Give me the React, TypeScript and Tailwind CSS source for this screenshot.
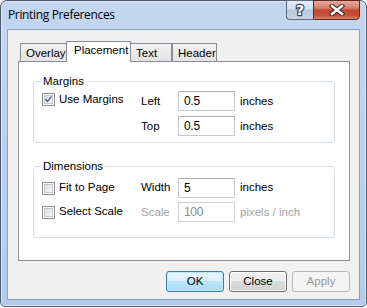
import React from "react";

const ui = "font-['Liberation_Sans',Arial,sans-serif] text-[11px] leading-none";

function Checkbox({ checked }: { checked?: boolean }) {
  return (
    <div className="w-[13px] h-[13px] border border-[#8e8f8f] bg-white p-[1px] shrink-0">
      <div className="w-full h-full border border-[#c4c8cc] bg-gradient-to-br from-[#d9dbdd] to-[#f6f6f6] flex items-center justify-center">
        {checked && (
          <svg width="9" height="9" viewBox="0 0 9 9">
            <path d="M1.2 4.6 L3.4 7 L7.8 1.2" fill="none" stroke="#4a5f97" strokeWidth="1.8" strokeLinecap="round" strokeLinejoin="round" />
          </svg>
        )}
      </div>
    </div>
  );
}

function Input({ value, disabled }: { value: string; disabled?: boolean }) {
  return (
    <div
      className={
        "w-[57px] h-[20px] border bg-white flex items-center pl-[5px] " +
        (disabled
          ? "border-[#cdd2d8] text-[#8a8a8a]"
          : "border-[#c5cbd3] border-t-[#abadb3] text-black")
      }
    >
      <span className="text-[12px] tracking-[-0.3px]">{value}</span>
    </div>
  );
}

function Button({ label, variant }: { label: string; variant?: "default" | "disabled" }) {
  const base = "w-[58px] h-[21px] rounded-[3px] border flex items-center justify-center text-[11.5px] ";
  if (variant === "disabled")
    return <div className={base + "border-[#b5b8bb] bg-[#f4f4f4] text-[#9a9a9a]"}>{label}</div>;
  if (variant === "default")
    return (
      <div className={base + "border-[#3c7fb1] bg-[linear-gradient(#eaf6fd_0%,#d9f0fc_50%,#bee6fd_50%,#a7d9f5_100%)] shadow-[inset_0_0_0_1px_#bfe6fa] text-black"}>
        {label}
      </div>
    );
  return (
    <div className={base + "border-[#707070] bg-[linear-gradient(#f2f2f2_0%,#ebebeb_50%,#dddddd_50%,#cfcfcf_100%)] shadow-[inset_0_0_0_1px_#fcfcfc] text-black"}>
      {label}
    </div>
  );
}

function Group({ title, children, className }: { title: string; children: React.ReactNode; className?: string }) {
  return (
    <fieldset className={"border border-[#d5dfe5] rounded-[3px] mx-[14px] " + (className || "")}>
      <legend className="ml-[7px] px-[2px] text-[11.5px] leading-[13px]">{title}</legend>
      {children}
    </fieldset>
  );
}

const T = "text-[11.5px]";

export default function App() {
  return (
    <div className={"w-[367px] h-[308px] bg-white " + ui}>
      <div className="w-[367px] h-[307px] rounded-t-[7px] rounded-b-[5px] border border-[#4b5a6c] bg-gradient-to-b from-[#c3d7ef] via-[#bcd2ec] to-[#b3cbe8] flex flex-col shadow-[inset_0_0_0_1px_#dfeaf7]">
        {/* title bar */}
        <div className="h-[28px] flex items-start">
          <div className="pl-[7px] pt-[6px] text-[12px] font-['Open_Sans','Noto_Sans',sans-serif] tracking-[-0.35px] text-black leading-[16px]">
            Printing Preferences
          </div>
          <div className="ml-auto mr-[6px] -mt-px flex">
            <div className="w-[27px] h-[20px] rounded-bl-[4px] border border-[#5b6a7d] border-r-0 bg-[linear-gradient(#e6edf5_0%,#d3dfea_45%,#b5c5d6_50%,#c9d7e5_100%)] flex items-center justify-center">
              <span className="text-white font-bold text-[14px] font-['DejaVu_Sans',sans-serif] [-webkit-text-stroke:2.5px_#3e4a59] [paint-order:stroke_fill]">?</span>
            </div>
            <div className="w-[47px] h-[20px] rounded-br-[4px] border border-[#5e2b24] bg-[linear-gradient(#e9a99b_0%,#d57e6a_40%,#c2462f_50%,#c7503a_80%,#d98469_100%)] flex items-center justify-center">
              <svg width="16" height="12" viewBox="0 0 16 12">
                <path d="M3 2 L13 10 M13 2 L3 10" stroke="#3b2a28" strokeWidth="4.6" strokeLinecap="square" />
                <path d="M3 2 L13 10 M13 2 L3 10" stroke="#ffffff" strokeWidth="2.4" strokeLinecap="square" />
              </svg>
            </div>
          </div>
        </div>

        {/* client area */}
        <div className="mx-[6px] mb-[6px] flex-1 border border-[#8aa2bf] bg-[#f0f0f0] flex flex-col">
          <div className="pl-[10px] pr-[9px] pt-[10px] flex flex-col">
            {/* tabs */}
            <div className={"flex items-end h-[21px] pl-[2px] " + T}>
              <div className="w-[48px] h-[18px] border border-b-0 border-[#898c95] bg-[linear-gradient(#f2f2f2,#e3e3e3)] flex items-center pl-[5px] pt-[2px]">
                Overlay
              </div>
              <div className="relative z-10 -mx-[2px] -mb-px w-[65px] h-[21px] border border-b-0 border-[#898c95] bg-white flex items-center pl-[7px] pb-[2px]">
                Placement
              </div>
              <div className="w-[43px] h-[18px] border border-b-0 border-[#898c95] bg-[linear-gradient(#f2f2f2,#e3e3e3)] flex items-center pl-[6px] pt-[2px]">
                Text
              </div>
              <div className="w-[45px] h-[18px] border border-b-0 border-[#898c95] bg-[linear-gradient(#f2f2f2,#e3e3e3)] flex items-center pl-[5px] pt-[2px]">
                Header
              </div>
            </div>
            {/* panel */}
            <div className={"h-[200px] border border-[#898c95] bg-white flex flex-col pt-[13px] " + T}>
              <Group title="Margins" className="pt-[3px] pb-[6px]">
                <div className="grid grid-cols-[99px_37px_57px_auto] gap-y-[5px] items-center pl-[8px]">
                  <div className="flex items-center gap-[4px] -mt-[3px]">
                    <Checkbox checked />
                    <span>Use Margins</span>
                  </div>
                  <span className="pt-[2px]">Left</span>
                  <Input value="0.5" />
                  <span className="pl-[5px] pt-[2px]">inches</span>

                  <div />
                  <span className="pt-[2px]">Top</span>
                  <Input value="0.5" />
                  <span className="pl-[5px] pt-[2px]">inches</span>
                </div>
              </Group>
              <Group title="Dimensions" className="mt-[17px] pt-[5px] pb-[15px]">
                <div className="grid grid-cols-[99px_37px_57px_auto] gap-y-[4px] items-center pl-[8px]">
                  <div className="flex items-center gap-[4px]">
                    <Checkbox />
                    <span>Fit to Page</span>
                  </div>
                  <span>Width</span>
                  <Input value="5" />
                  <span className="pl-[5px]">inches</span>

                  <div className="flex items-center gap-[4px]">
                    <Checkbox />
                    <span>Select Scale</span>
                  </div>
                  <span className="text-[#a3a3a3] pt-[2px]">Scale</span>
                  <Input value="100" disabled />
                  <span className="pl-[5px] pt-[2px] text-[#a3a3a3]">pixels / inch</span>
                </div>
              </Group>
            </div>
          </div>
          {/* buttons */}
          <div className="mt-[10px] pr-[9px] flex justify-end gap-[5px]">
            <Button label="OK" variant="default" />
            <Button label="Close" />
            <Button label="Apply" variant="disabled" />
          </div>
        </div>
      </div>
    </div>
  );
}
